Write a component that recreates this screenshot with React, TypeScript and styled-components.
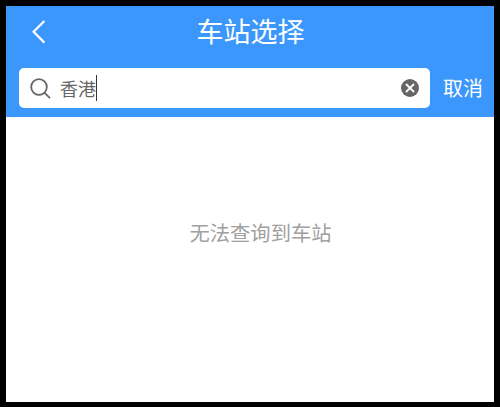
import styled, {createGlobalStyle} from "styled-components";

const GlobalStyle = createGlobalStyle`
    html, body {
        margin: 0;
        padding: 0;
        background: #000;
    }
`

const Frame = styled.div`
    box-sizing: border-box;
    width: 500px;
    height: 407px;
    padding: 6px 6px 5px 6px;
    background: #000;
    font-family: "Noto Sans CJK SC", "Liberation Sans", sans-serif;
`

const Screen = styled.div`
    height: 100%;
    display: flex;
    flex-direction: column;
    background: #fff;
`

const Header = styled.div`
    background: #3b97fb;
    height: 111px;
    display: flex;
    flex-direction: column;
    flex-shrink: 0;
`

const TitleBar = styled.div`
    position: relative;
    height: 62px;
    display: flex;
    align-items: flex-start;
    justify-content: center;
`

const BackButton = styled.div`
    position: absolute;
    left: 25px;
    top: 13px;
    display: flex;
`

const Title = styled.div`
    color: #fff;
    font-size: 27px;
    line-height: 50px;
    margin-left: 1px;
`

const SearchRow = styled.div`
    display: flex;
    align-items: center;
    padding-left: 13px;
`

const SearchBox = styled.div`
    width: 411px;
    height: 40px;
    box-sizing: border-box;
    background: #fff;
    border-radius: 5px;
    display: flex;
    align-items: center;
    padding: 0 10px 0 11px;
`

const QueryText = styled.span`
    margin-left: 9px;
    color: #666;
    font-size: 18px;
    line-height: 28px;
`

const Caret = styled.span`
    width: 1px;
    height: 26px;
    background: #333;
`

const ClearButton = styled.div`
    margin-left: auto;
    display: flex;
    margin-right: 1px;
`

const CancelButton = styled.div`
    color: #fff;
    font-size: 20px;
    line-height: 40px;
    margin-left: 13px;
`

const Body = styled.div`
    flex: 1;
    display: flex;
    justify-content: center;
    padding: 100px 0 0 21px;
`

const EmptyText = styled.div`
    color: #a0a0a0;
    font-size: 20.3px;
    line-height: 30px;
`

export default function App() {
    return (
        <Frame>
            <GlobalStyle/>
            <Screen>
                <Header>
                    <TitleBar>
                        <BackButton>
                            <svg width="16" height="26" viewBox="0 0 16 26" fill="none">
                                <path d="M13.4 2 L2.6 12.8 L13.4 23.6" stroke="#fff" strokeWidth="2.2"/>
                            </svg>
                        </BackButton>
                        <Title>车站选择</Title>
                    </TitleBar>
                    <SearchRow>
                        <SearchBox>
                            <svg width="21" height="21" viewBox="0 0 21 21" fill="none">
                                <circle cx="9" cy="9" r="7.8" stroke="#666" strokeWidth="1.8"/>
                                <path d="M14.6 14.8 L20 20.2" stroke="#666" strokeWidth="1.8"/>
                            </svg>
                            <QueryText>香港</QueryText>
                            <Caret/>
                            <ClearButton>
                                <svg width="18" height="18" viewBox="0 0 18 18">
                                    <circle cx="9" cy="9" r="9" fill="#666"/>
                                    <path d="M5 5 L13 13 M13 5 L5 13" stroke="#fff" strokeWidth="1.8"/>
                                </svg>
                            </ClearButton>
                        </SearchBox>
                        <CancelButton>取消</CancelButton>
                    </SearchRow>
                </Header>
                <Body>
                    <EmptyText>无法查询到车站</EmptyText>
                </Body>
            </Screen>
        </Frame>
    )
}
